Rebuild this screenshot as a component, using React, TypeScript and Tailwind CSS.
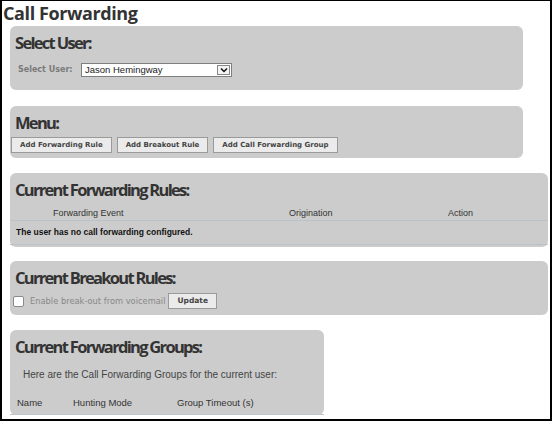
import React from "react";

const headFont = { fontFamily: '"Open Sans", "DejaVu Sans", sans-serif' };

function Panel({
  title,
  className,
  children,
}: {
  title: string;
  className: string;
  children?: React.ReactNode;
}) {
  return (
    <div className={`ml-[8px] rounded-[6px] bg-[#cccccc] ${className}`}>
      <div
        className="pl-[5px] pt-[6px] text-[16.5px] font-bold leading-[22px] tracking-[-1.7px] text-[#333333]"
        style={headFont}
      >
        {title}
      </div>
      {children}
    </div>
  );
}

function Btn({ label }: { label: string }) {
  return (
    <div className="flex h-[16px] items-center border border-[#9a9a9a] bg-[#ebebeb] px-[8px] font-['DejaVu_Sans',sans-serif] text-[7px] font-bold text-[#444444]">
      {label}
    </div>
  );
}

export default function App() {
  return (
    <div className="h-[421px] w-[552px] overflow-hidden border-x-2 border-b-2 border-t border-black bg-white">
      <div
        className="pl-[1px] pt-[0px] text-[18px] font-bold leading-[24px] tracking-[-0.4px] text-[#333333]"
        style={headFont}
      >
        Call Forwarding
      </div>

      {/* Select User */}
      <Panel title="Select User:" className="mt-[1px] h-[64px] w-[513px]">
        <div className="mt-[9px] flex items-center pl-[8px]">
          <span className="w-[63px] font-['DejaVu_Sans',sans-serif] text-[8px] font-bold text-[#7a7a7a]">
            Select User:
          </span>
          <div className="flex h-[14px] w-[151px] items-center border border-[#7f7f7f] bg-white">
            <span className="flex-1 pl-[3px] font-['Liberation_Sans',Arial,sans-serif] text-[9.5px] leading-none text-[#222222]">
              Jason Hemingway
            </span>
            <div className="mr-[1px] flex h-[10px] w-[13px] items-center justify-center border border-[#888888] bg-[#f4f4f4]">
              <svg width="8" height="6" viewBox="0 0 8 6">
                <path d="M1 1.5 L4 4.5 L7 1.5" fill="none" stroke="#111" strokeWidth="1.5" />
              </svg>
            </div>
          </div>
        </div>
      </Panel>

      {/* Menu */}
      <Panel title="Menu:" className="mt-[16px] h-[52px] w-[513px]">
        <div className="mt-[3px] flex gap-[5px] pl-[1px]">
          <Btn label="Add Forwarding Rule" />
          <Btn label="Add Breakout Rule" />
          <Btn label="Add Call Forwarding Group" />
        </div>
      </Panel>

      {/* Current Forwarding Rules */}
      <Panel title="Current Forwarding Rules:" className="mt-[15px] h-[74px] w-[538px]">
        <div className="mt-[6px] flex h-[14px] items-center border-b border-[#b7c2cb] pl-[43px] font-['Liberation_Sans',Arial,sans-serif] text-[9px] text-[#333333]">
          <span className="w-[236px]">Forwarding Event</span>
          <span className="w-[159px]">Origination</span>
          <span>Action</span>
        </div>
        <div className="flex h-[24px] items-center border-b border-[#b7c2cb] pl-[6px] font-['Liberation_Sans',Arial,sans-serif] text-[8.5px] font-bold text-[#111111]">
          The user has no call forwarding configured.
        </div>
      </Panel>

      {/* Current Breakout Rules */}
      <Panel title="Current Breakout Rules:" className="mt-[14px] h-[54px] w-[538px]">
        <div className="mt-[4px] flex items-center pl-[3px]">
          <div className="h-[11px] w-[11px] rounded-[2px] border border-[#8a8a8a] bg-white" />
          <span className="ml-[6px] font-['DejaVu_Sans',sans-serif] text-[8.3px] text-[#888888]">
            Enable break-out from voicemail
          </span>
          <div className="ml-[3px] flex h-[16px] items-center border border-[#9a9a9a] bg-[#ebebeb] px-[8px] font-['DejaVu_Sans',sans-serif] text-[7.5px] font-bold text-[#444444]">
            Update
          </div>
        </div>
      </Panel>

      {/* Current Forwarding Groups */}
      <Panel title="Current Forwarding Groups:" className="mt-[15px] h-[85px] w-[314px]">
        <div className="mt-[9px] pl-[13px] font-['Liberation_Sans',Arial,sans-serif] text-[10px] text-[#444444]">
          Here are the Call Forwarding Groups for the current user:
        </div>
        <div className="mt-[14px] flex border-b border-[#bfc6cc] pb-[4px] pl-[7px] font-['Liberation_Sans',Arial,sans-serif] text-[9.5px] text-[#333333]">
          <span className="w-[56px]">Name</span>
          <span className="w-[104px]">Hunting Mode</span>
          <span>Group Timeout (s)</span>
        </div>
      </Panel>
    </div>
  );
}
